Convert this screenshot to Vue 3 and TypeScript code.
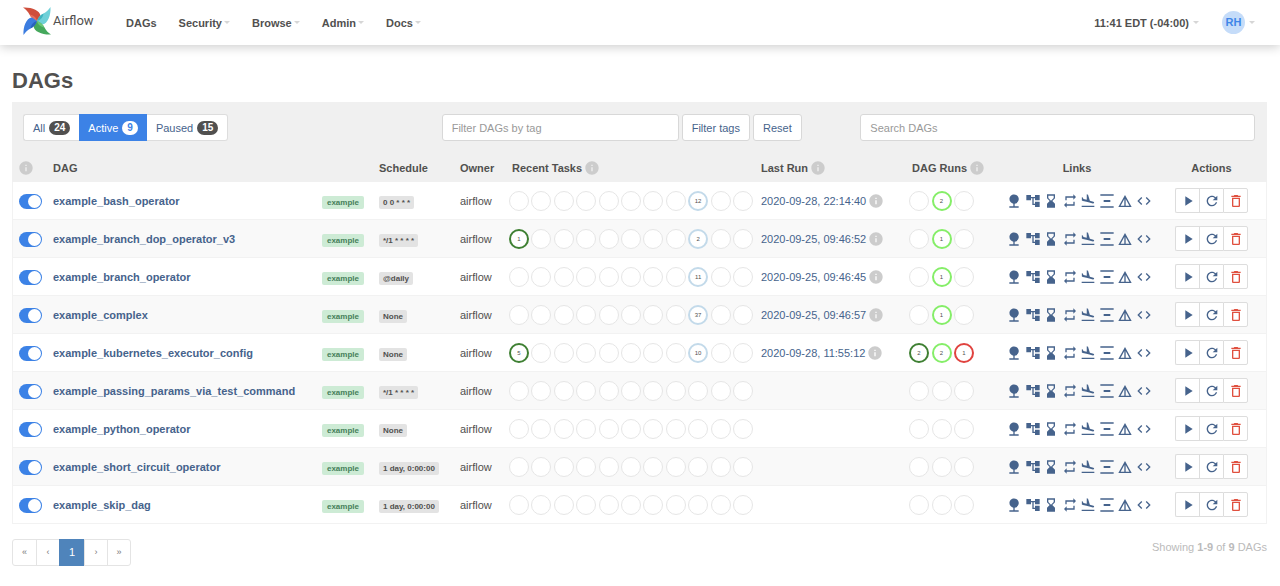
<script setup lang="ts">
import { ref } from 'vue'

interface Dag {
  id: string
  schedule: string
  tasks: Record<number, [number, string]>
  lastRun?: string
  runs: (number | null)[]
  on: boolean
}

const menus = ['Security', 'Browse', 'Admin', 'Docs']
const blades = [
  { main: '#cf4f3c', shade: '#e8705c', turn: 0 },
  { main: '#6fd0d8', shade: '#3fb3bf', turn: 90 },
  { main: '#45a85c', shade: '#6cc878', turn: 180 },
  { main: '#3c7de0', shade: '#2a62bd', turn: 270 },
]

const paths = {
  info: 'M12 2C6.48 2 2 6.48 2 12s4.48 10 10 10 10-4.48 10-10S17.52 2 12 2zm1 15h-2v-6h2v6zm0-8h-2V7h2v2z',
  play: 'M8 5v14l11-7z',
  refresh:
    'M17.65 6.35C16.2 4.9 14.21 4 12 4c-4.42 0-7.99 3.58-7.99 8s3.57 8 7.99 8c3.73 0 6.84-2.55 7.73-6h-2.08c-.82 2.33-3.04 4-5.65 4-3.31 0-6-2.69-6-6s2.69-6 6-6c1.66 0 3.14.69 4.22 1.78L13 11h7V4l-2.35 2.35z',
  trash:
    'M6 19c0 1.1.9 2 2 2h8c1.1 0 2-.9 2-2V7H6v12zM8 9h8v10H8V9zm7.5-5l-1-1h-5l-1 1H5v2h14V4z',
}

const links = [
  { name: 'Tree View', d: 'M13 16.12c3.47-.41 6.17-3.36 6.17-6.95 0-3.87-3.13-7-7-7s-7 3.13-7 7c0 3.47 2.52 6.34 5.83 6.89V20H5v2h14v-2h-6v-3.88z' },
  { name: 'Graph View', d: 'M22 11V3h-7v3H9V3H2v8h7V8h2v10h4v3h7v-8h-7v3h-2V8h2v3z' },
  { name: 'Task Duration', d: 'M18 22l-.01-6L14 12l3.99-4.01L18 2H6v6l4 4-4 3.99V22h12zM8 7.5V4h8v3.5l-4 4-4-4z' },
  { name: 'Task Tries', d: 'M7 7h10v3l4-4-4-4v3H5v6h2V7zm10 10H7v-3l-4 4 4 4v-3h12v-6h-2v4z' },
  { name: 'Landing Times', d: 'M2.5 19h19v2h-19v-2zm7.18-5.73l4.35 1.16 5.31 1.42c.8.21 1.62-.26 1.84-1.06.21-.8-.26-1.62-1.06-1.84l-5.31-1.42-2.76-9.02L10.12 2v8.28L5.15 8.95l-.93-2.32-1.45-.39v5.17l1.6.43 5.31 1.43z' },
  { name: 'Gantt View', d: 'M22 2v2H2V2h20zM7 10.5v3h10v-3H7zM2 20v2h20v-2H2z' },
  { name: 'Details', d: 'M12 3L2 21h20L12 3zm1 5.92L18.6 19H13V8.92zm-2 0V19H5.4L11 8.92z' },
  { name: 'Code', d: 'M9.4 16.6L4.8 12l4.6-4.6L8 6l-6 6 6 6 1.4-1.4zm5.2 0l4.6-4.6-4.6-4.6L16 6l6 6-6 6-1.4-1.4z' },
]

const runStates = ['success', 'running', 'failed']

const dags = ref<Dag[]>([
  { id: 'example_bash_operator', schedule: '0 0 * * *', tasks: { 9: [12, 'none'] }, lastRun: '2020-09-28, 22:14:40', runs: [null, 2, null], on: true },
  { id: 'example_branch_dop_operator_v3', schedule: '*/1 * * * *', tasks: { 1: [1, 'success'], 9: [2, 'none'] }, lastRun: '2020-09-25, 09:46:52', runs: [null, 1, null], on: true },
  { id: 'example_branch_operator', schedule: '@daily', tasks: { 9: [11, 'none'] }, lastRun: '2020-09-25, 09:46:45', runs: [null, 1, null], on: true },
  { id: 'example_complex', schedule: 'None', tasks: { 9: [37, 'none'] }, lastRun: '2020-09-25, 09:46:57', runs: [null, 1, null], on: true },
  { id: 'example_kubernetes_executor_config', schedule: 'None', tasks: { 1: [5, 'success'], 9: [10, 'none'] }, lastRun: '2020-09-28, 11:55:12', runs: [2, 2, 1], on: true },
  { id: 'example_passing_params_via_test_command', schedule: '*/1 * * * *', tasks: {}, runs: [null, null, null], on: true },
  { id: 'example_python_operator', schedule: 'None', tasks: {}, runs: [null, null, null], on: true },
  { id: 'example_short_circuit_operator', schedule: '1 day, 0:00:00', tasks: {}, runs: [null, null, null], on: true },
  { id: 'example_skip_dag', schedule: '1 day, 0:00:00', tasks: {}, runs: [null, null, null], on: true },
])
</script>

<template>
  <div class="page">
    <header class="navbar">
      <a class="brand" href="#">
        <svg class="pinwheel" viewBox="0 0 28 28" aria-hidden="true">
          <g v-for="b in blades" :key="b.turn" :transform="`rotate(${b.turn} 14 14)`">
            <path :fill="b.main" d="M0 0.5 C8 0 17 3 17.500 9 L14 14 C10 12.500 8 10.500 6.500 7.500 C5 4.500 3 2.500 0 0.500Z" />
            <path :fill="b.shade" d="M6.500 7.500 C10 8 13 10 14 14 C10 12.500 8 10.500 6.500 7.500Z" />
          </g>
        </svg>
        <span>Airflow</span>
      </a>
      <nav class="menu">
        <a href="#">DAGs</a>
        <a v-for="m in menus" :key="m" href="#">{{ m }}<i class="caret"></i></a>
      </nav>
      <div class="user">
        <a href="#">11:41 EDT (-04:00)<i class="caret"></i></a>
        <a href="#"><span class="avatar">RH</span><i class="caret"></i></a>
      </div>
    </header>

    <main>
      <h1>DAGs</h1>
      <section class="panel">
        <div class="filters">
          <div class="pills">
            <a href="#">All <b>24</b></a>
            <a href="#" class="active">Active <b>9</b></a>
            <a href="#">Paused <b>15</b></a>
          </div>
          <form class="tag-form" @submit.prevent>
            <input type="text" placeholder="Filter DAGs by tag" aria-label="Filter DAGs by tag" />
            <button type="submit">Filter tags</button>
            <button type="reset">Reset</button>
          </form>
          <input type="search" placeholder="Search DAGs" aria-label="Search DAGs" />
        </div>

        <table>
          <colgroup>
            <col class="c-toggle" /><col /><col class="c-schedule" /><col class="c-owner" />
            <col class="c-tasks" /><col class="c-last" /><col class="c-runs" />
            <col class="c-links" /><col class="c-actions" />
          </colgroup>
          <thead>
            <tr>
              <th class="first"><svg class="info" viewBox="0 0 24 24"><path :d="paths.info" /></svg></th>
              <th>DAG</th>
              <th>Schedule</th>
              <th>Owner</th>
              <th class="inset">Recent Tasks<svg class="info after" viewBox="0 0 24 24"><path :d="paths.info" /></svg></th>
              <th>Last Run<svg class="info after" viewBox="0 0 24 24"><path :d="paths.info" /></svg></th>
              <th class="inset">DAG Runs<svg class="info after" viewBox="0 0 24 24"><path :d="paths.info" /></svg></th>
              <th class="center">Links</th>
              <th class="center">Actions</th>
            </tr>
          </thead>
          <tbody>
            <tr v-for="dag in dags" :key="dag.id">
              <td class="first">
                <input v-model="dag.on" class="toggle" type="checkbox" :aria-label="dag.id" />
              </td>
              <td>
                <div class="name">
                  <a href="#">{{ dag.id }}</a>
                  <a class="tag" href="#">example</a>
                </div>
              </td>
              <td><a class="tag schedule" href="#">{{ dag.schedule }}</a></td>
              <td>airflow</td>
              <td>
                <div class="dots tasks">
                  <span v-for="n in 11" :key="n" :class="['dot', dag.tasks[n]?.[1]]">{{ dag.tasks[n]?.[0] }}</span>
                </div>
              </td>
              <td>
                <template v-if="dag.lastRun">
                  <a href="#">{{ dag.lastRun }}</a>
                  <svg class="info after" viewBox="0 0 24 24"><path :d="paths.info" /></svg>
                </template>
              </td>
              <td>
                <div class="dots runs">
                  <span v-for="(n, i) in dag.runs" :key="i" :class="['dot', n ? runStates[i] : '']">{{ n }}</span>
                </div>
              </td>
              <td>
                <div class="links">
                  <a v-for="l in links" :key="l.name" href="#" :aria-label="l.name">
                    <svg class="icon" viewBox="0 0 24 24"><path :d="l.d" /></svg>
                  </a>
                </div>
              </td>
              <td>
                <div class="actions">
                  <button type="button" aria-label="Trigger DAG"><svg class="icon" viewBox="0 0 24 24"><path :d="paths.play" /></svg></button>
                  <button type="button" aria-label="Refresh DAG"><svg class="icon" viewBox="0 0 24 24"><path :d="paths.refresh" /></svg></button>
                  <button type="button" class="danger" aria-label="Delete DAG"><svg class="icon" viewBox="0 0 24 24"><path :d="paths.trash" /></svg></button>
                </div>
              </td>
            </tr>
          </tbody>
        </table>
      </section>

      <footer>
        <nav class="pager" aria-label="Pages">
          <a href="#">«</a>
          <a href="#">‹</a>
          <a href="#" class="current">1</a>
          <a href="#">›</a>
          <a href="#">»</a>
        </nav>
        <p>Showing <b>1-9</b> of <b>9</b> DAGs</p>
      </footer>
    </main>
  </div>
</template>

<style>
body {
  margin: 0;
  background: #fff;
}
</style>

<style scoped>
.page {
  font: 11px/16px "Liberation Sans", Arial, sans-serif;
  color: #51504f;
}
.page *,
.page *::before {
  box-sizing: border-box;
}
a {
  color: #46638c;
  text-decoration: none;
}
svg {
  display: block;
  fill: currentColor;
}
input,
button {
  font: inherit;
}

.navbar {
  display: flex;
  align-items: center;
  height: 45px;
  padding: 0 25px 0 23px;
  box-shadow: 0 2px 10px rgba(0, 0, 0, 0.2);
}
.navbar a {
  display: flex;
  align-items: center;
  color: #51504f;
  font-weight: bold;
}
.navbar .brand {
  gap: 2px;
  width: 103px;
  padding-bottom: 3px;
  font: 400 13px/16px Roboto, sans-serif;
}
.pinwheel {
  width: 28px;
  height: 28px;
}
.menu {
  display: flex;
  gap: 22px;
}
.caret {
  margin-left: 2px;
  border: 3px solid transparent;
  border-top-color: #d6d6d6;
  border-bottom: 0;
}
.user {
  display: flex;
  gap: 23px;
  margin-left: auto;
}
.user .caret {
  margin-left: 4px;
}
.avatar {
  width: 23px;
  height: 23px;
  border-radius: 50%;
  background: #c5dcf9;
  color: #3f86e8;
  line-height: 23px;
  text-align: center;
}

main {
  padding: 22px 13px 20px 12px;
}
h1 {
  margin: 0 0 7px;
  font-size: 22px;
  line-height: 28px;
}
.panel {
  background: #f0f0f0;
}
.filters {
  display: grid;
  grid-template-columns: repeat(3, 1fr);
  gap: 24px;
  padding: 12px 12px 12px 11px;
}
.pills {
  display: flex;
  justify-self: start;
}
.pills a {
  display: flex;
  align-items: center;
  gap: 4px;
  height: 27px;
  padding: 0 9px;
  border: 1px solid #ddd;
  border-width: 1px 0;
  background: #fff;
}
.pills a:first-child {
  border-left-width: 1px;
  border-radius: 3px 0 0 3px;
}
.pills a:last-child {
  border-right-width: 1px;
  border-radius: 0 3px 3px 0;
}
.pills b {
  padding: 0 5px;
  border-radius: 7px;
  background: #51504f;
  color: #fff;
  font-size: 10px;
  line-height: 14px;
}
.pills .active {
  border-color: #3c82e6;
  background: #3c82e6;
  color: #fff;
}
.pills .active b {
  background: #fff;
  color: #3c82e6;
}
.tag-form {
  display: flex;
  gap: 3px;
}
.tag-form input {
  width: 237px;
}
.filters input,
.tag-form button {
  height: 27px;
  padding: 0 9px;
  border: 1px solid #d8d8d8;
  border-radius: 3px;
  outline: 0;
  background: #fff;
  color: #46638c;
}
.filters input {
  appearance: none;
  min-width: 0;
}
.filters input::placeholder {
  color: #999;
}

table {
  width: 100%;
  table-layout: fixed;
  border-collapse: separate;
  border-spacing: 0;
}
.c-toggle { width: 33px; }
.c-schedule { width: 81px; }
.c-owner { width: 49px; }
.c-tasks { width: 252px; }
.c-last { width: 148px; }
.c-runs { width: 97px; }
.c-links { width: 158px; }
.c-actions { width: 111px; }
th {
  height: 29px;
  padding: 0 0 0 8px;
  text-align: left;
  white-space: nowrap;
}
td {
  height: 38px;
  padding: 0 0 0 8px;
  border-bottom: 1px solid #f2f2f2;
  background: #fff;
  white-space: nowrap;
}
tr:nth-child(even) td {
  background: #f9f9f9;
}
td:first-child {
  border-left: 1px solid #f2f2f2;
}
td:last-child {
  border-right: 1px solid #f2f2f2;
}
th.first {
  padding-left: 6px;
}
td.first {
  padding: 2px 0 0 6px;
}
th.inset {
  padding-left: 11px;
}
th.center {
  padding: 0;
  text-align: center;
}
.info {
  display: inline-block;
  width: 16px;
  height: 16px;
  color: #ccc;
  vertical-align: top;
}
.after {
  margin-left: 2px;
}
.toggle {
  display: block;
  appearance: none;
  width: 23px;
  height: 15px;
  margin: 0;
  padding: 1px;
  border-radius: 8px;
  background: #bbb;
}
.toggle::before {
  content: "";
  display: block;
  width: 13px;
  height: 13px;
  border-radius: 50%;
  background: #fff;
}
.toggle:checked {
  background: #3c82e6;
}
.toggle:checked::before {
  margin-left: auto;
}
.name {
  display: flex;
  align-items: baseline;
  justify-content: space-between;
  padding-right: 7px;
  font-weight: bold;
}
.tag {
  padding: 0 5px;
  border-radius: 2px;
  background: #cdebd5;
  color: #46805a;
  font-size: 8px;
  font-weight: bold;
  line-height: 13px;
}
.schedule {
  display: inline-block;
  padding: 0 4px;
  background: #e3e3e3;
  color: #51504f;
}
.dots {
  display: flex;
  justify-content: space-between;
}
.tasks {
  width: 244px;
}
.runs {
  width: 65px;
}
.dot {
  width: 20px;
  height: 20px;
  border: 1px solid #e6e6e6;
  border-radius: 50%;
  background: #fff;
  font-size: 6px;
  line-height: 17px;
  text-align: center;
}
.none {
  border: 2px solid #c3daea;
  line-height: 16px;
}
.success {
  border: 2px solid #3f8033;
  line-height: 16px;
}
.running {
  border: 2px solid #85ee68;
  line-height: 16px;
}
.failed {
  border: 2px solid #e0433f;
  line-height: 16px;
}
.icon {
  width: 16px;
  height: 16px;
}
.links {
  display: flex;
  justify-content: space-between;
  width: 146px;
}
.actions {
  display: flex;
  width: 73px;
  margin-left: 11px;
}
.actions button {
  display: grid;
  flex: 1;
  place-items: center;
  height: 25px;
  padding: 0;
  border: 1px solid #ddd;
  border-right-width: 0;
  background: #fff;
  color: #46638c;
}
.actions button:first-child {
  border-radius: 2px 0 0 2px;
}
.actions button:last-child {
  border-right-width: 1px;
  border-radius: 0 2px 2px 0;
}
.actions .danger {
  color: #e0503f;
}

footer {
  display: flex;
  align-items: flex-start;
  justify-content: space-between;
  padding-top: 15px;
}
.pager {
  display: flex;
  border: 1px solid #e4e4e4;
  border-radius: 3px;
}
.pager a {
  width: 23px;
  height: 25px;
  color: #777;
  font-size: 9px;
  line-height: 25px;
  text-align: center;
}
.pager a + a {
  border-left: 1px solid #e4e4e4;
}
.pager .current {
  width: 25px;
  height: 27px;
  margin: -1px 0;
  border-color: #4f84bb;
  background: #4f84bb;
  color: #fff;
  font-size: 11px;
  line-height: 27px;
}
footer p {
  margin: 0;
  color: #bbb;
}
</style>
